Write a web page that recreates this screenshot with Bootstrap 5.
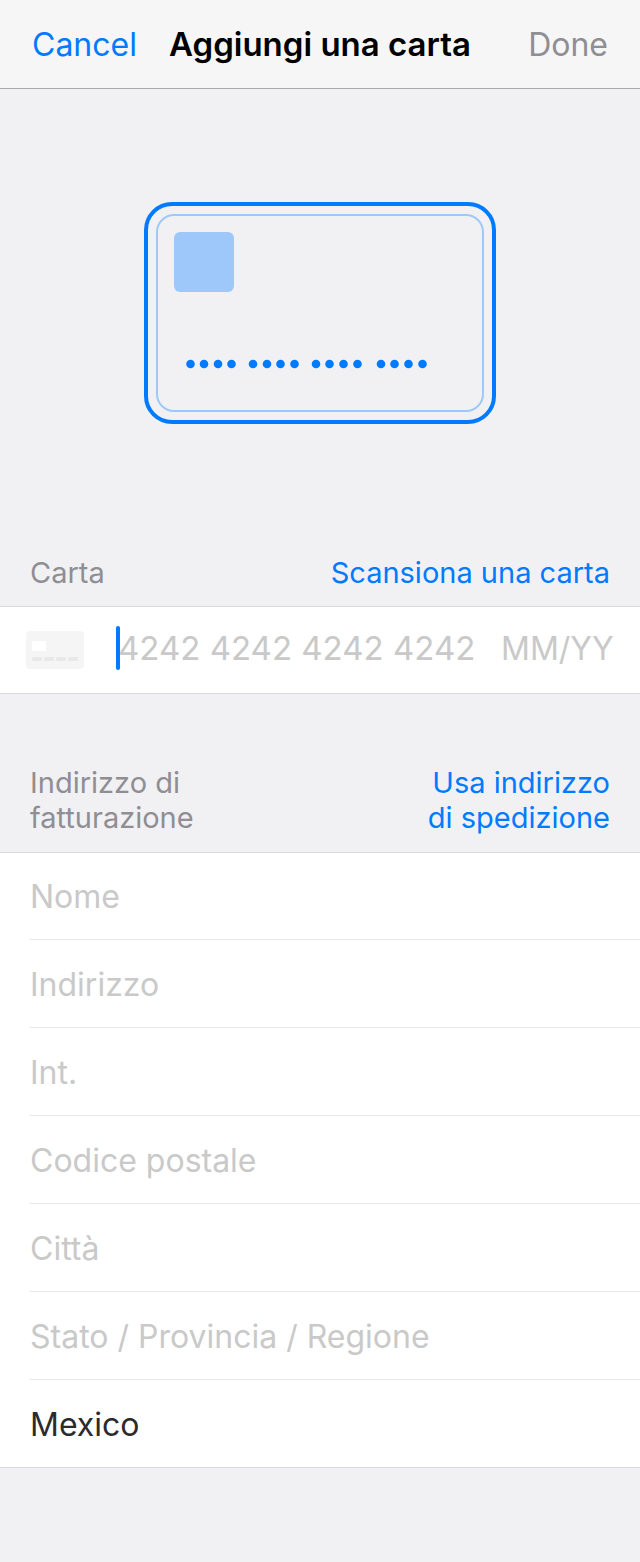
<!DOCTYPE html>
<html lang="it">
<head>
<meta charset="utf-8">
<meta name="viewport" content="width=device-width, initial-scale=1">
<title>Aggiungi una carta</title>
<link href="https://cdn.jsdelivr.net/npm/bootstrap@5.3.0/dist/css/bootstrap.min.css" rel="stylesheet">
<style>
  :root { --tint: #007aff; --muted: #8e8e93; --hint: #c9c9c9; --line: #d9d9dc; }
  body { background: #f1f1f4; font-family: Inter, "Liberation Sans", sans-serif; color: #2b2b2d; font-size: 32px; line-height: 40px; }
  .top-bar { background: #f6f6f6; border-bottom: 1px solid #a9a9ab; padding: 24px 32px; }
  .top-bar h1 { font-size: 33px; line-height: 40px; font-weight: 600; color: #000; }
  .bar-side { flex: 1 1 0; }
  .bar-btn { font-size: 32px; line-height: 38px; padding: 2px 0 0; color: var(--tint); }
  .bar-btn:disabled { color: var(--muted); opacity: 1; }
  .hero { padding: 113px 0 131px; }
  .section-head { padding: 0 30px 16px; font-size: 29px; line-height: 35px; gap: 30px; }
  .section-head h2 { font-size: 29px; line-height: 35px; font-weight: 400; color: var(--muted); }
  .section-head a { color: var(--tint); }
  .group { background: #fff; border-bottom: 1px solid var(--line); border-top: 1px solid var(--line); }
  .field { background: transparent; border: 0; border-radius: 0; outline: 0; padding: 0; min-width: 0; width: 100%; height: 86px; color: inherit; appearance: none; }
  .field::placeholder { color: var(--hint); opacity: 1; }
  .card-line { padding: 0 26px; }
  .number-wrap { margin-left: 34px; font-size: 33px; }
  .number-wrap .field, .expiry { padding-bottom: 4px; }
  .expiry { width: 113px; }
  .text-caret { width: 4px; height: 44px; left: -2px; top: 19px; border-radius: 2px; background: var(--tint); }
  .address-head { padding-top: 71px; padding-bottom: 17px; }
  .field-row { margin-left: 30px; }
  .field-row + .field-row { border-top: 1px solid #e8e8ea; }
  .field-row + .field-row .field { height: 87px; padding-top: 2px; }
</style>
</head>
<body>
<header class="top-bar d-flex align-items-center">
  <div class="bar-side d-flex"><button type="button" class="bar-btn btn border-0">Cancel</button></div>
  <h1 class="m-0 text-nowrap">Aggiungi una carta</h1>
  <div class="bar-side d-flex justify-content-end"><button type="button" class="bar-btn btn border-0" disabled>Done</button></div>
</header>
<main>
  <div class="hero d-flex justify-content-center">
    <svg width="352" height="222" viewBox="0 0 352 222" fill="none" aria-hidden="true">
      <rect x="2" y="2" width="348" height="218" rx="26" stroke="#007aff" stroke-width="4"/>
      <rect x="13" y="13" width="326" height="196" rx="17" stroke="#9ec8fa" stroke-width="2"/>
      <rect x="30" y="30" width="60" height="60" rx="6" fill="#9ec8fa"/>
      <g fill="#007aff">
        <circle cx="46.5" cy="162" r="4.3"/><circle cx="60" cy="162" r="4.3"/><circle cx="74" cy="162" r="4.3"/><circle cx="87.5" cy="162" r="4.3"/>
        <circle cx="109" cy="162" r="4.3"/><circle cx="123" cy="162" r="4.3"/><circle cx="136.5" cy="162" r="4.3"/><circle cx="150.5" cy="162" r="4.3"/>
        <circle cx="172" cy="162" r="4.3"/><circle cx="185.5" cy="162" r="4.3"/><circle cx="199.5" cy="162" r="4.3"/><circle cx="213.5" cy="162" r="4.3"/>
        <circle cx="237" cy="162" r="4.3"/><circle cx="250.5" cy="162" r="4.3"/><circle cx="264.5" cy="162" r="4.3"/><circle cx="278.5" cy="162" r="4.3"/>
      </g>
    </svg>
  </div>

  <section>
    <div class="section-head d-flex justify-content-between">
      <h2 class="m-0">Carta</h2>
      <a href="#" class="text-decoration-none text-end">Scansiona una carta</a>
    </div>
    <div class="group card-line d-flex align-items-center">
      <svg class="flex-shrink-0" width="58" height="38" viewBox="0 0 58 38" aria-hidden="true">
        <rect width="58" height="38" rx="4" fill="#f5f5f5"/>
        <rect x="6" y="10" width="14" height="10" rx="1" fill="#fff"/>
        <g fill="#e8e8e8"><rect x="6" y="26" width="10" height="4" rx="1.5"/><rect x="18" y="26" width="10" height="4" rx="1.5"/><rect x="30" y="26" width="10" height="4" rx="1.5"/><rect x="42" y="26" width="10" height="4" rx="1.5"/></g>
      </svg>
      <div class="number-wrap position-relative flex-grow-1">
        <input class="field d-block" type="text" inputmode="numeric" placeholder="4242 4242 4242 4242" aria-label="Numero della carta">
        <span class="text-caret position-absolute"></span>
      </div>
      <input class="field expiry flex-shrink-0" type="text" inputmode="numeric" placeholder="MM/YY" aria-label="Scadenza">
    </div>
  </section>

  <section>
    <div class="section-head address-head d-flex justify-content-between">
      <h2 class="m-0">Indirizzo di<br>fatturazione</h2>
      <a href="#" class="text-decoration-none text-end">Usa indirizzo<br>di spedizione</a>
    </div>
    <div class="group">
      <div class="field-row"><input class="field d-block" type="text" placeholder="Nome" aria-label="Nome"></div>
      <div class="field-row"><input class="field d-block" type="text" placeholder="Indirizzo" aria-label="Indirizzo"></div>
      <div class="field-row"><input class="field d-block" type="text" placeholder="Int." aria-label="Interno"></div>
      <div class="field-row"><input class="field d-block" type="text" placeholder="Codice postale" aria-label="Codice postale"></div>
      <div class="field-row"><input class="field d-block" type="text" placeholder="Città" aria-label="Città"></div>
      <div class="field-row"><input class="field d-block" type="text" placeholder="Stato / Provincia / Regione" aria-label="Stato, provincia o regione"></div>
      <div class="field-row"><select class="field d-block" aria-label="Paese"><option>Mexico</option></select></div>
    </div>
  </section>
</main>
<script src="https://cdn.jsdelivr.net/npm/bootstrap@5.3.0/dist/js/bootstrap.bundle.min.js"></script>
</body>
</html>
